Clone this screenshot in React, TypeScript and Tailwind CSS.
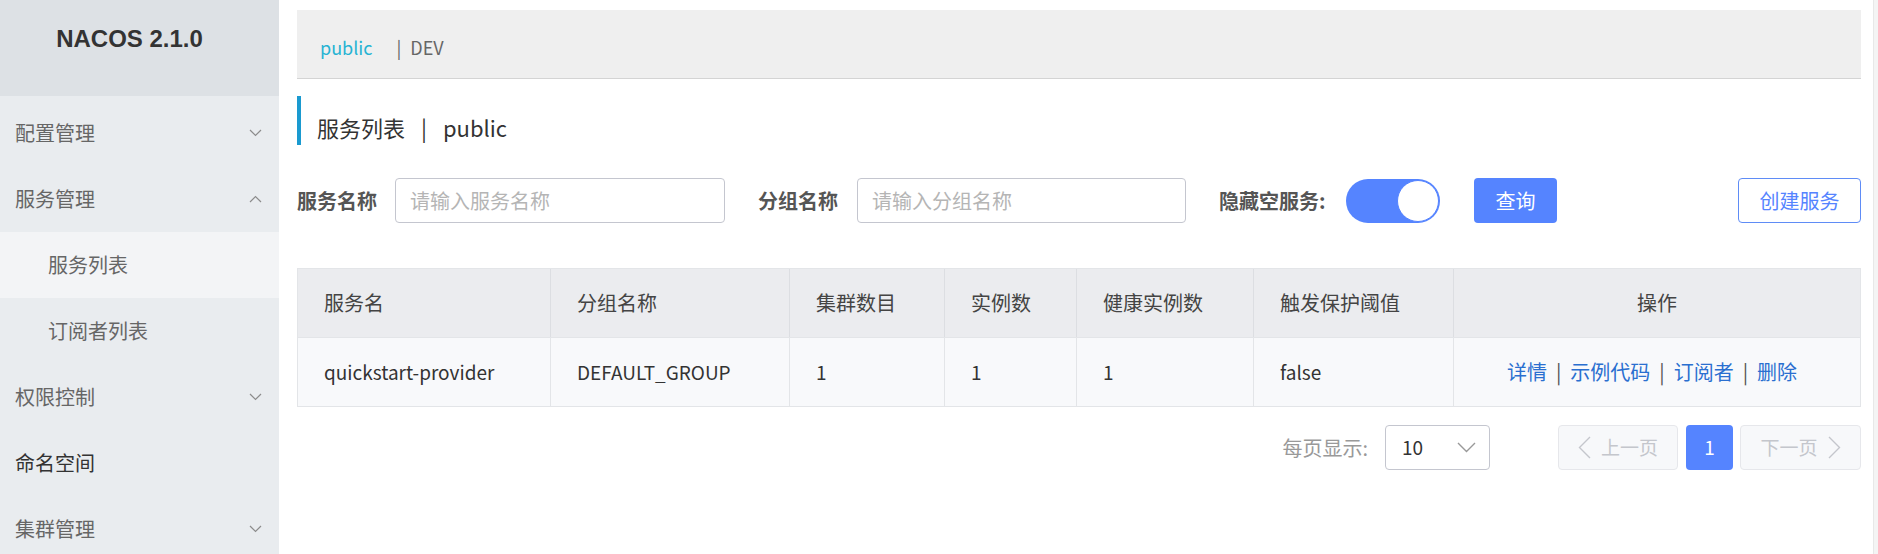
import React from "react";

const Down = () => (
  <svg width="13" height="8" viewBox="0 0 13 8" fill="none">
    <polyline points="1,1 6.5,6.5 12,1" stroke="#8c8c8c" strokeWidth="1.2" />
  </svg>
);
const Up = () => (
  <svg width="13" height="8" viewBox="0 0 13 8" fill="none">
    <polyline points="1,7 6.5,1.5 12,7" stroke="#8c8c8c" strokeWidth="1.2" />
  </svg>
);

function MenuItem({
  label,
  icon,
  sub,
  active,
  dark,
}: {
  label: string;
  icon?: "up" | "down";
  sub?: boolean;
  active?: boolean;
  dark?: boolean;
}) {
  return (
    <div
      className={`h-[66px] shrink-0 flex items-center justify-between pr-[17px] text-[20px] ${
        sub ? "pl-[48px]" : "pl-[15px]"
      } ${active ? "bg-[#f3f4f6]" : ""} ${dark ? "text-[#333]" : "text-[#666]"}`}
    >
      <span>{label}</span>
      {icon === "down" && <Down />}
      {icon === "up" && <Up />}
    </div>
  );
}

const cols = ["服务名", "分组名称", "集群数目", "实例数", "健康实例数", "触发保护阈值"];
const vals = ["quickstart-provider", "DEFAULT_GROUP", "1", "1", "1", "false"];

export default function App() {
  return (
    <div className="flex w-[1878px] h-[554px] overflow-hidden bg-white font-['Noto_Sans_CJK_SC','Noto_Sans',sans-serif]">
      <aside className="w-[279px] shrink-0 bg-[#e9ecef] flex flex-col overflow-hidden">
        <div className="h-[96px] shrink-0 bg-[#dde1e5] pt-[24px] pr-[20px] text-center leading-[30px] text-[24px] font-bold text-[#333] font-['Liberation_Sans',sans-serif]">
          NACOS 2.1.0
        </div>
        <nav className="pt-[4px] shrink-0">
          <MenuItem label="配置管理" icon="down" />
          <MenuItem label="服务管理" icon="up" />
          <MenuItem label="服务列表" sub active />
          <MenuItem label="订阅者列表" sub />
          <MenuItem label="权限控制" icon="down" />
          <MenuItem label="命名空间" dark />
          <MenuItem label="集群管理" icon="down" />
        </nav>
      </aside>

      <main className="flex-1 pl-[18px] pr-[12px] pt-[10px]">
        <div className="h-[69px] bg-[#efefef] border-b border-[#d4d4d4] flex items-center pl-[23px] pt-[6px] text-[18px]">
          <span className="text-[#26b3d3]">public</span>
          <span className="ml-[24px] text-[#666]">|</span>
          <span className="ml-[9px] text-[#666]">DEV</span>
        </div>

        <div className="mt-[17px] h-[49px] border-l-[4px] border-[#1a9ad0] flex items-center pl-[16px] pt-[14px] text-[22px] text-[#333]">
          <span>服务列表</span>
          <span className="mx-[16px]">|</span>
          <span>public</span>
        </div>

        <div className="mt-[33px] h-[45px] flex items-center text-[20px]">
          <div className="w-[98px] font-bold text-[#555]">服务名称</div>
          <div className="w-[330px] h-[45px] border border-[#c4c6cf] rounded-[4px] flex items-center pl-[14px] text-[#b5b5b5]">
            请输入服务名称
          </div>
          <div className="ml-[33px] w-[99px] font-bold text-[#555]">分组名称</div>
          <div className="w-[329px] h-[45px] border border-[#c4c6cf] rounded-[4px] flex items-center pl-[14px] text-[#b5b5b5]">
            请输入分组名称
          </div>
          <div className="ml-[33px] w-[127px] font-bold text-[#555]">隐藏空服务:</div>
          <div className="relative w-[94px] h-[44px] rounded-full bg-[#5584ff]">
            <div className="absolute right-[1px] top-[1px] w-[42px] h-[42px] rounded-full bg-white border border-[#5584ff]" />
          </div>
          <div className="ml-[34px] w-[83px] h-[45px] rounded-[4px] bg-[#5584ff] text-white flex items-center justify-center">
            查询
          </div>
          <div className="flex-1" />
          <div className="w-[123px] h-[45px] rounded-[4px] border border-[#5f8cf6] text-[#5584ff] flex items-center justify-center">
            创建服务
          </div>
        </div>

        <div className="mt-[45px] border border-[#e3e5e8] text-[20px]">
          <div className="grid grid-cols-[252px_239px_155px_132px_177px_200px_1fr] h-[68px] bg-[#ebecef] text-[#444]">
            {cols.map((c, i) => (
              <div
                key={c}
                className={`flex items-center pl-[26px] ${i > 0 ? "border-l border-[#dcdee2]" : ""}`}
              >
                {c}
              </div>
            ))}
            <div className="flex items-center justify-center border-l border-[#dcdee2]">操作</div>
          </div>
          <div className="grid grid-cols-[252px_239px_155px_132px_177px_200px_1fr] h-[69px] bg-[#f8f9fb] border-t border-[#e3e5e8] text-[#333]">
            {vals.map((v, i) => (
              <div
                key={i}
                className={`flex items-center pl-[26px] text-[19px] ${i > 0 ? "border-l border-[#e3e5e8]" : ""}`}
              >
                {v}
              </div>
            ))}
            <div className="flex items-center justify-center pr-[10px] border-l border-[#e3e5e8] text-[#2a6fd0]">
              <span>详情</span>
              <span className="mx-[9px] text-[#555]">|</span>
              <span>示例代码</span>
              <span className="mx-[9px] text-[#555]">|</span>
              <span>订阅者</span>
              <span className="mx-[9px] text-[#555]">|</span>
              <span>删除</span>
            </div>
          </div>
        </div>

        <div className="mt-[18px] h-[45px] flex items-center justify-end text-[19px]">
          <span className="text-[#999] text-[20px]">每页显示:</span>
          <div className="ml-[17px] w-[105px] h-[45px] border border-[#c4c6cf] rounded-[4px] flex items-center justify-between pl-[16px] pr-[13px] text-[#333]">
            <span>10</span>
            <svg width="19" height="11" viewBox="0 0 19 11" fill="none">
              <polyline points="1,1 9.5,9.5 18,1" stroke="#999" strokeWidth="1.4" />
            </svg>
          </div>
          <div className="ml-[68px] w-[120px] h-[45px] border border-[#e6e7eb] bg-[#f7f8fa] rounded-[4px] flex items-center justify-center gap-[10px] text-[#c4c6cc]">
            <svg width="13" height="23" viewBox="0 0 13 23" fill="none">
              <polyline points="12,1 1.5,11.5 12,22" stroke="#c4c6cc" strokeWidth="1.4" />
            </svg>
            <span>上一页</span>
          </div>
          <div className="ml-[8px] w-[47px] h-[45px] rounded-[4px] bg-[#5584ff] text-white flex items-center justify-center">
            1
          </div>
          <div className="ml-[7px] w-[121px] h-[45px] border border-[#e6e7eb] bg-[#f7f8fa] rounded-[4px] flex items-center justify-center gap-[10px] text-[#c4c6cc]">
            <span>下一页</span>
            <svg width="13" height="23" viewBox="0 0 13 23" fill="none">
              <polyline points="1,1 11.5,11.5 1,22" stroke="#c4c6cc" strokeWidth="1.4" />
            </svg>
          </div>
        </div>
      </main>
      <div className="w-[5px] shrink-0 bg-[#f4f4f4] border-l border-[#e8e8e8]" />
    </div>
  );
}
